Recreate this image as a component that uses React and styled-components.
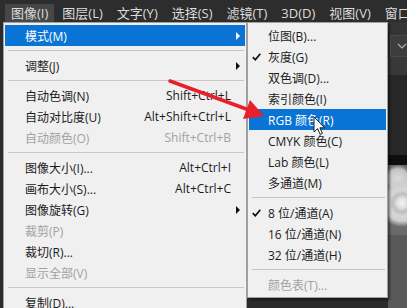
import React from 'react'
import styled, { createGlobalStyle } from 'styled-components'

const Global = createGlobalStyle`
  html, body {
    margin: 0;
    padding: 0;
    background: #2b2b2b;
  }
  body {
    font-family: "Open Sans", "Noto Sans CJK SC", sans-serif;
  }
`

const barItems = ['图像(I)', '图层(L)', '文字(Y)', '选择(S)', '滤镜(T)', '3D(D)', '视图(V)', '窗口(W)']

const mainItems = [
  { label: '模式(M)', sub: true, active: true },
  { sep: true },
  { label: '调整(J)', sub: true },
  { sep: true },
  { label: '自动色调(N)', key: 'Shift+Ctrl+L' },
  { label: '自动对比度(U)', key: 'Alt+Shift+Ctrl+L' },
  { label: '自动颜色(O)', key: 'Shift+Ctrl+B', disabled: true },
  { sep: true },
  { label: '图像大小(I)...', key: 'Alt+Ctrl+I' },
  { label: '画布大小(S)...', key: 'Alt+Ctrl+C' },
  { label: '图像旋转(G)', sub: true },
  { label: '裁剪(P)', disabled: true },
  { label: '裁切(R)...' },
  { label: '显示全部(V)', disabled: true },
  { sep: true },
  { label: '复制(D)...' },
]

const modeItems = [
  { label: '位图(B)...' },
  { label: '灰度(G)', checked: true },
  { label: '双色调(D)...' },
  { label: '索引颜色(I)' },
  { label: 'RGB 颜色(R)', active: true },
  { label: 'CMYK 颜色(C)' },
  { label: 'Lab 颜色(L)' },
  { label: '多通道(M)' },
  { sep: true },
  { label: '8 位/通道(A)', checked: true },
  { label: '16 位/通道(N)' },
  { label: '32 位/通道(H)' },
  { sep: true },
  { label: '颜色表(T)...', disabled: true },
]

const Check = () => (
  <svg width="9" height="8" viewBox="0 0 9 8">
    <path d="M0.8 4.2 L3.3 6.8 L8.3 0.8" fill="none" stroke="#111" strokeWidth="1.7" />
  </svg>
)

const App = () => {
  return (
    <>
      <Global />
      <Screen>
        <MenuBar>
          {barItems.map((t, i) => (
            <BarItem key={t} $active={i === 0}>{t}</BarItem>
          ))}
        </MenuBar>
        <Body>
          <Gutter />
          <Menu>
            {mainItems.map((it, i) =>
              it.sep ? (
                <Sep key={i} />
              ) : (
                <Row key={i} $active={it.active} $disabled={it.disabled}>
                  <span>{it.label}</span>
                  <Shortcut>{it.key}</Shortcut>
                  <ArrowCell>{it.sub && <Caret $active={it.active} />}</ArrowCell>
                </Row>
              )
            )}
          </Menu>
          <SubMenu>
            {modeItems.map((it, i) =>
              it.sep ? (
                <Sep key={i} />
              ) : (
                <SubRow key={i} $active={it.active} $disabled={it.disabled}>
                  <CheckCell>{it.checked && <Check />}</CheckCell>
                  <span>{it.label}</span>
                </SubRow>
              )
            )}
          </SubMenu>
          <Workspace>
            <Band $h={13} $c="#353535" />
            <ToolBox>
              <svg width="10" height="6" viewBox="0 0 10 6">
                <path d="M1 1 L5 5 L9 1" fill="none" stroke="#b5b5b5" strokeWidth="1.1" />
              </svg>
            </ToolBox>
            <Band $h={18} $c="#383838" />
            <Band $h={80} $c="#272727" />
            <Band $h={10} $c="#0e0e0e" />
            <Flower />
            <Band $h={80} $c="#595959" />
          </Workspace>
        </Body>

        <Overlay width="407" height="308" viewBox="0 0 407 308">
          <line x1="170" y1="81" x2="249" y2="110" stroke="#e8202a" strokeWidth="3.5" strokeLinecap="round" />
          <polygon points="264,116 243,119 250,100" fill="#e8202a" />
        </Overlay>

        <Pointer width="13" height="20" viewBox="0 0 13 20">
          <path d="M1 1 L1 16 L4.6 12.6 L7.2 18.4 L9.4 17.4 L6.9 11.8 L11.6 11.8 Z" fill="#fff" stroke="#222" strokeWidth="1" strokeLinejoin="round" />
        </Pointer>
      </Screen>
    </>
  )
}

const Screen = styled.div`
  position: relative;
  width: 407px;
  height: 308px;
  overflow: hidden;
  background: #2b2b2b;
`

const MenuBar = styled.div`
  display: flex;
  align-items: flex-end;
  height: 22px;
  padding-left: 5px;
  background: #2d2d2d;
  box-sizing: border-box;
  white-space: nowrap;
`

const BarItem = styled.div`
  height: 18px;
  line-height: 18px;
  padding: 0 6px;
  margin-right: 2px;
  font-size: 13px;
  color: #dcdcdc;
  background: ${p => (p.$active ? '#474747' : 'transparent')};
`

const Body = styled.div`
  display: flex;
  align-items: flex-start;
  height: 286px;
`

const Gutter = styled.div`
  width: 3px;
  flex: none;
`

const Menu = styled.div`
  flex: none;
  width: 244px;
  box-sizing: border-box;
  padding: 2px 1px;
  background: #f0f0f0;
  border: 1px solid #a0a0a0;
`

const Row = styled.div`
  display: grid;
  grid-template-columns: 1fr auto 14px;
  align-items: center;
  height: 21px;
  padding-left: 20px;
  font-size: 12px;
  white-space: nowrap;
  color: ${p => (p.$active ? '#fff' : p.$disabled ? '#a2a2a2' : '#1b1b1b')};
  background: ${p => (p.$active ? '#0a74d6' : 'transparent')};
`

const Shortcut = styled.span`
  text-align: right;
`

const ArrowCell = styled.span`
  display: flex;
  justify-content: center;
  align-items: center;
`

const Caret = styled.i`
  width: 0;
  height: 0;
  border-top: 4px solid transparent;
  border-bottom: 4px solid transparent;
  border-left: 4px solid ${p => (p.$active ? '#fff' : '#111')};
`

const Sep = styled.div`
  height: 9px;
  position: relative;
  &::after {
    content: '';
    position: absolute;
    left: 3px;
    right: 1px;
    top: 4px;
    height: 1px;
    background: #c6c6c6;
  }
`

const SubMenu = styled.div`
  flex: none;
  width: 141px;
  box-sizing: border-box;
  padding: 2px 1px;
  background: #f0f0f0;
  border: 1px solid #a0a0a0;
  box-shadow: 2px 2px 2px rgba(0, 0, 0, 0.45);
  position: relative;
  z-index: 1;
`

const SubRow = styled.div`
  display: flex;
  align-items: center;
  height: 21px;
  font-size: 12px;
  white-space: nowrap;
  color: ${p => (p.$active ? '#fff' : p.$disabled ? '#a2a2a2' : '#1b1b1b')};
  background: ${p => (p.$active ? '#0a74d6' : 'transparent')};
`

const CheckCell = styled.span`
  width: 19px;
  flex: none;
  display: flex;
  padding-left: 3px;
  box-sizing: border-box;
`

const Workspace = styled.div`
  flex: 1;
  display: flex;
  flex-direction: column;
`

const Band = styled.div`
  height: ${p => p.$h}px;
  background: ${p => p.$c};
`

const ToolBox = styled.div`
  height: 22px;
  background: #3d3d3d;
  border-left: 1px solid #575757;
  border-top: 1px solid #4a4a4a;
  border-bottom: 1px solid #4a4a4a;
  margin-left: 2px;
  display: flex;
  align-items: center;
  justify-content: flex-end;
  box-sizing: border-box;
`

const Flower = styled.div`
  height: 70px;
  background:
    radial-gradient(circle at 14px 38px, #f4f4f4 0, #e0e0e0 5px, #bdbdbd 9px, #d6d6d6 13px, #cfcfcf 18px, transparent 24px),
    radial-gradient(circle at 10px 14px, #dcdcdc 0, #c4c4c4 10px, transparent 14px),
    #6a6a6a;
`

const Overlay = styled.svg`
  position: absolute;
  left: 0;
  top: 0;
  pointer-events: none;
  z-index: 3;
`

const Pointer = styled.svg`
  position: absolute;
  left: 313px;
  top: 116px;
  z-index: 4;
`

export default App
